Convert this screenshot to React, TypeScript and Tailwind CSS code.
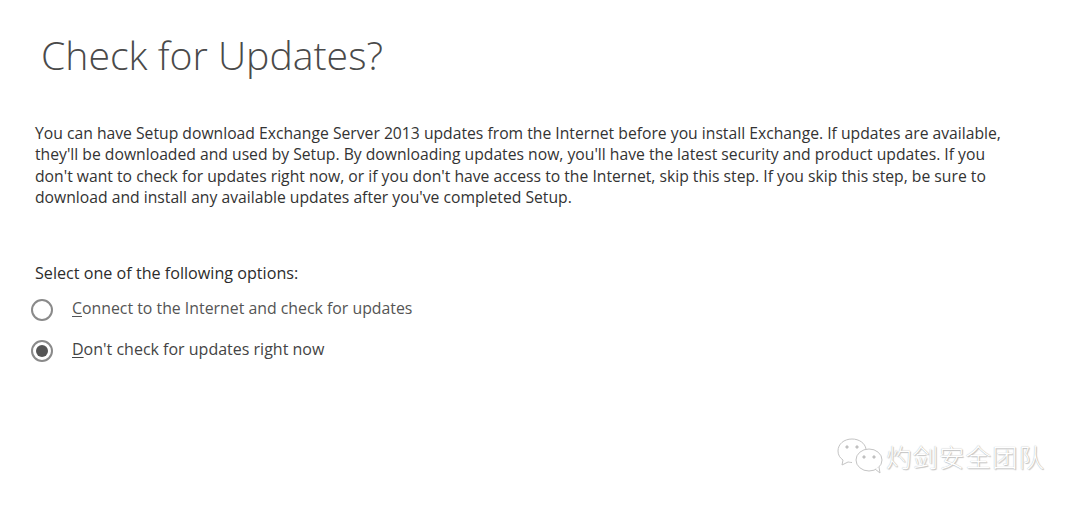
export default function App() {
  const lines = [
    "You can have Setup download Exchange Server 2013 updates from the Internet before you install Exchange. If updates are available,",
    "they'll be downloaded and used by Setup. By downloading updates now, you'll have the latest security and product updates. If you",
    "don't want to check for updates right now, or if you don't have access to the Internet, skip this step. If you skip this step, be sure to",
    "download and install any available updates after you've completed Setup.",
  ];
  return (
    <div className="w-[1080px] h-[505px] bg-white overflow-hidden relative font-['Open_Sans','Noto_Sans',sans-serif] text-[#3c3c3c]">
      <div className="pl-[35px] pt-[28px]">
        <h1 className="pl-[6px] text-[39.2px] leading-[54px] font-light text-[#4a4a4a]">Check for Updates?</h1>
        <div className="mt-[41px] text-[15.71px] leading-[21.3px] text-[#333]">
          {lines.map((l) => (
            <div key={l} className="whitespace-nowrap">{l}</div>
          ))}
        </div>
        <div className="mt-[55px] text-[16.15px] leading-[21px] font-medium text-[#2c2c2c]">Select one of the following options:</div>
        <div className="-ml-[4px] mt-[15px] flex items-center gap-[19px] h-[22px]">
          <span className="w-[22px] h-[22px] rounded-full border-2 border-[#8a8a8a] bg-white" />
          <span className="pb-[2px] text-[15.85px] text-[#555]"><span className="underline underline-offset-2">C</span>onnect to the Internet and check for updates</span>
        </div>
        <div className="-ml-[4px] mt-[19px] flex items-center gap-[19px] h-[22px]">
          <span className="w-[22px] h-[22px] rounded-full border-2 border-[#8a8a8a] bg-white flex items-center justify-center">
            <span className="w-[12px] h-[12px] rounded-full bg-[#555]" />
          </span>
          <span className="pb-[4px] text-[16px] text-[#444]"><span className="underline underline-offset-2">D</span>on't check for updates right now</span>
        </div>
      </div>
      <div className="absolute left-[837px] top-[438px] flex items-center">
        <svg width="50" height="36" viewBox="0 0 50 36" fill="none" stroke="#c4c4c4" strokeWidth="1">
          <path d="M15 1C7 1 1 6 1 13c0 4 2 7 5 9l-1 5 6-3c1 0 2 .5 4 .5" fill="#fff" />
          <path d="M15 1c7 0 13 4 14 10" />
          <ellipse cx="32" cy="22" rx="13" ry="11" fill="#fff" />
          <path d="M38 31l5 4-1-6" fill="#fff" />
          <circle cx="10" cy="9" r="1.2" fill="#bbb" /><circle cx="20" cy="9" r="1.2" fill="#bbb" />
          <circle cx="27" cy="19" r="1.2" fill="#bbb" /><circle cx="37" cy="19" r="1.2" fill="#bbb" />
        </svg>
        <span className="ml-[-1px] text-[25.5px] leading-[36px] text-white font-['Noto_Sans_CJK_SC',sans-serif] font-light [text-shadow:0_0_1px_#aaa,1px_1px_1px_#c4c4c4] tracking-[1px] whitespace-nowrap">灼剑安全团队</span>
      </div>
    </div>
  );
}
